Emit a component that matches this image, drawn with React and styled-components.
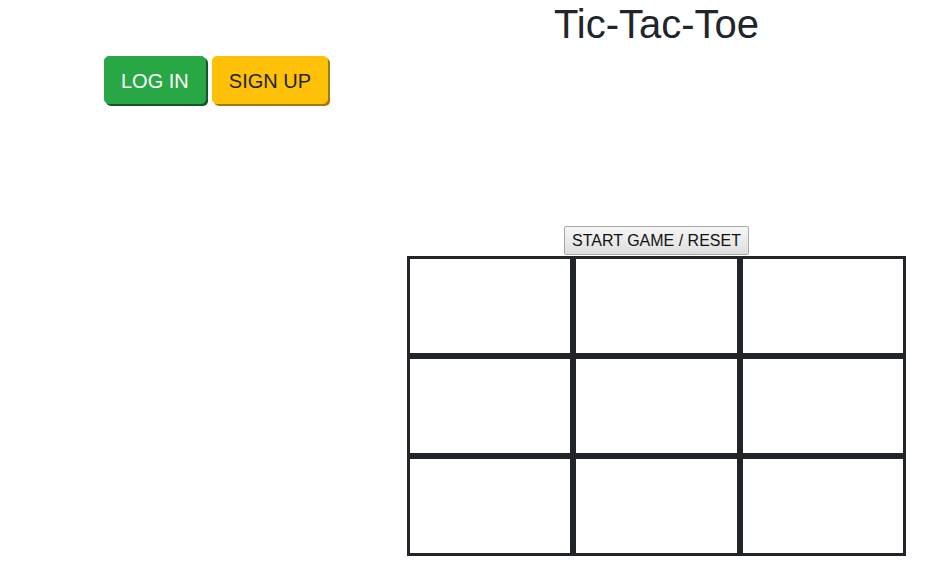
import React from "react";
import styled, { createGlobalStyle } from "styled-components";

const GlobalStyle = createGlobalStyle`
  html, body { margin: 0; padding: 0; background: #fff; }
  body {
    font-family: "Liberation Sans", Arial, sans-serif;
    color: #212529;
  }
  * { box-sizing: border-box; }
`;

const Page = styled.div`
  display: grid;
  grid-template-columns: 375px 1fr;
  width: 937px;
`;

const LeftCol = styled.div`
  padding: 56px 0 0 104px;
  display: flex;
  align-items: flex-start;
  gap: 6px;
`;

const RightCol = styled.div`
  display: flex;
  flex-direction: column;
  align-items: center;
  padding-left: 1px;
`;

const Title = styled.h1`
  margin: 0;
  font-size: 40px;
  line-height: 48px;
  font-weight: 400;
  color: #212529;
`;

const AuthButton = styled.button`
  font-family: "Liberation Sans", Arial, sans-serif;
  font-size: 20px;
  line-height: 30px;
  padding: 9px 16px 7px;
  border: 1px solid ${(p) => p.$bg};
  border-radius: 4.8px;
  background: ${(p) => p.$bg};
  color: ${(p) => p.$fg};
  box-shadow: 2px 2px 0 ${(p) => p.$shadow};
  cursor: pointer;
`;

const ResetButton = styled.button`
  margin-top: 178px;
  margin-bottom: 1px;
  height: 29px;
  padding: 1px 7px;
  font-family: "Liberation Sans", Arial, sans-serif;
  font-size: 16px;
  color: #111;
  background: linear-gradient(#f6f6f6, #dedede);
  border: 1px solid #a9a9a9;
  border-radius: 2px;
`;

const Board = styled.div`
  display: grid;
  grid-template-columns: repeat(3, 1fr);
  width: 499px;
`;

const Cell = styled.div`
  height: 100px;
  border: 3px solid #212529;
  background: #fff;
`;

export default function App() {
  return (
    <>
      <GlobalStyle />
      <Page>
        <LeftCol>
          <AuthButton $bg="#28a745" $fg="#fff" $shadow="#16562a">
            LOG IN
          </AuthButton>
          <AuthButton $bg="#ffc107" $fg="#212529" $shadow="#a27b06">
            SIGN UP
          </AuthButton>
        </LeftCol>
        <RightCol>
          <Title>Tic-Tac-Toe</Title>
          <ResetButton>START GAME / RESET</ResetButton>
          <Board>
            {Array.from({ length: 9 }).map((_, i) => (
              <Cell key={i} />
            ))}
          </Board>
        </RightCol>
      </Page>
    </>
  );
}
